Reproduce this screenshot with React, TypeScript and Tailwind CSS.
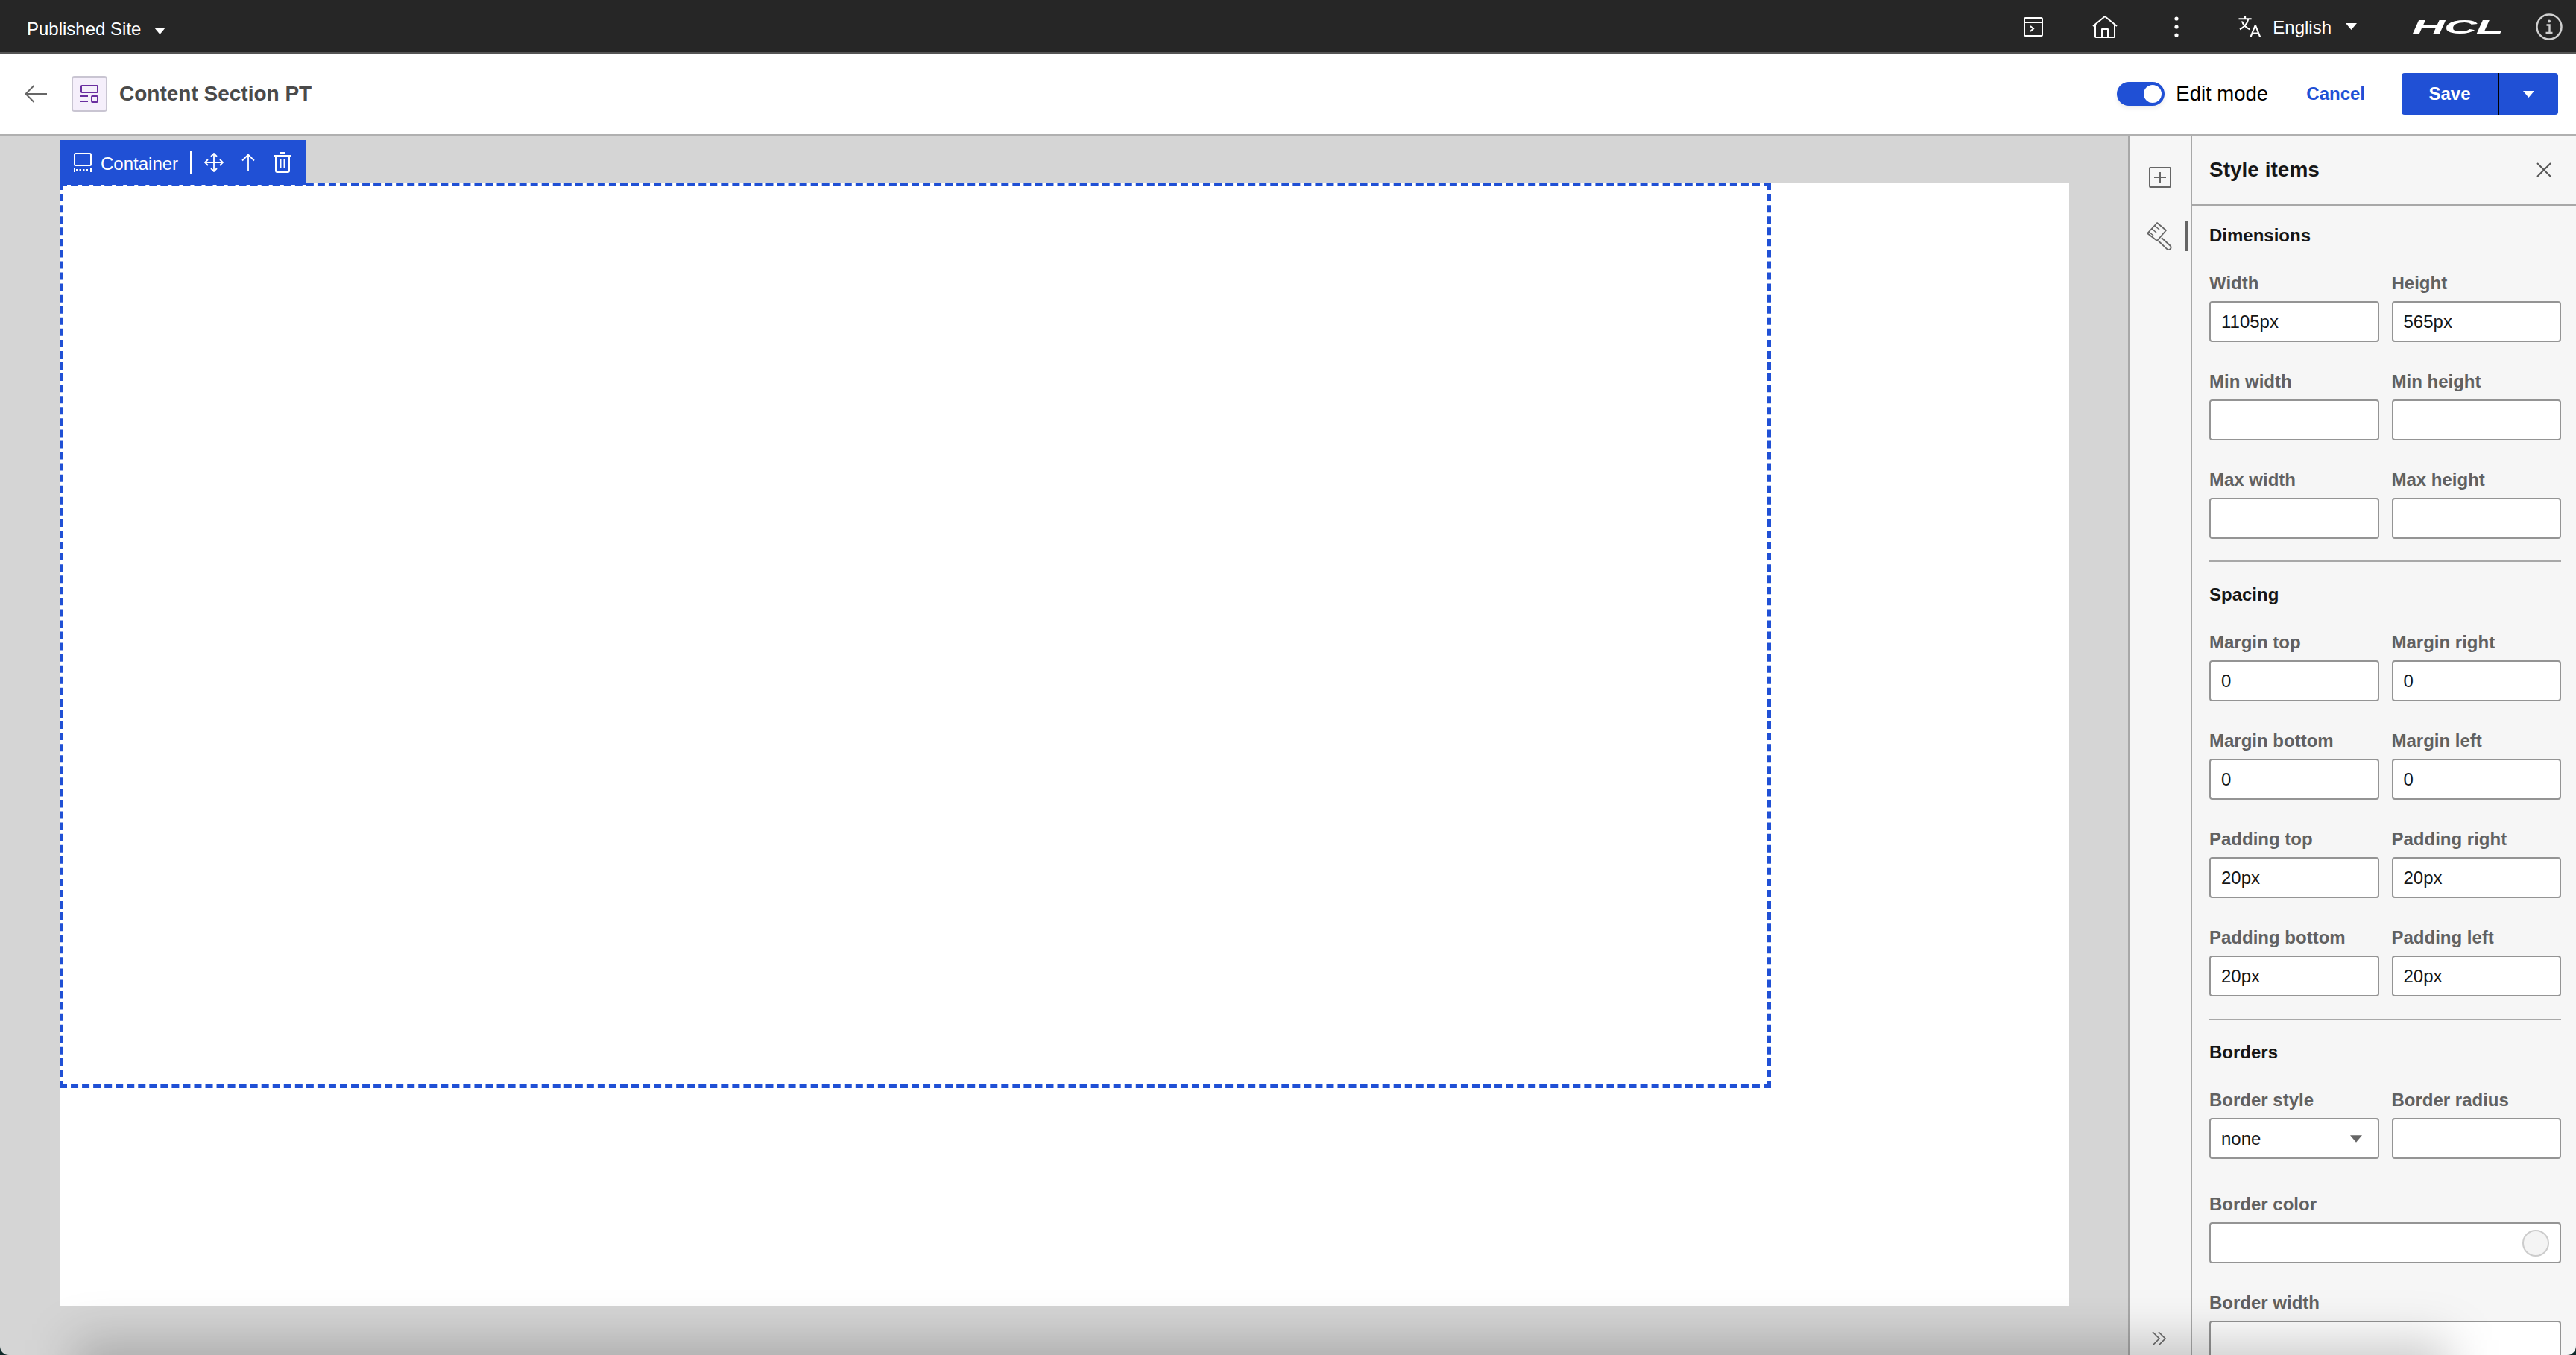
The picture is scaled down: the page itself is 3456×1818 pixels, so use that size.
import React from 'react';

const Caret = ({ className }: { className: string }) => (
  <svg viewBox="0 0 10 6" className={className} fill="currentColor">
    <path d="M0 0h10L5 6z" />
  </svg>
);

const Field = ({ label, value, className = '' }: { label: string; value?: string; className?: string }) => (
  <div className={className}>
    <div className="h-[28px] mb-[10px] text-[24px] leading-[28px] font-bold text-[#616161] whitespace-nowrap">{label}</div>
    <div className="h-[55px] bg-white border-2 border-[#949494] rounded-[4px] pl-[14px] flex items-center text-[24px] text-[#161616]">
      {value}
    </div>
  </div>
);

const SectionTitle = ({ children }: { children: React.ReactNode }) => (
  <div className="h-[28px] mb-[36px] text-[24px] leading-[28px] font-bold text-[#161616]">{children}</div>
);

const TopBar = () => (
  <div className="h-[72px] shrink-0 bg-[#262626] border-b-2 border-[#555555] flex items-center pl-[36px] pr-[18px] text-white">
    <span className="text-[24px] mt-[8px]">Published Site</span>
    <Caret className="w-[15px] h-[9px] ml-[18px] mt-[12px]" />

    <svg viewBox="0 0 26 26" className="ml-auto mt-[1px] w-[26px] h-[26px]" fill="none" stroke="currentColor" strokeWidth="2">
      <rect x="1" y="1" width="24" height="24" rx="1.5" />
      <path d="M1 7h24" />
      <path d="M9 12l4 3.5-4 3.5" />
    </svg>
    <svg viewBox="0 0 34 30" className="ml-[66px] mt-[1px] w-[34px] h-[30px]" fill="none" stroke="currentColor" strokeWidth="2" strokeLinejoin="round">
      <path d="M1 14L17 1l16 13" />
      <path d="M4 12v16a1 1 0 0 0 1 1h24a1 1 0 0 0 1-1V12" />
      <path d="M13 29V18h8v11" />
    </svg>
    <svg viewBox="0 0 8 30" className="ml-[75px] mt-[1px] w-[8px] h-[30px]" fill="currentColor">
      <circle cx="4" cy="4" r="2.6" />
      <circle cx="4" cy="15" r="2.6" />
      <circle cx="4" cy="26" r="2.6" />
    </svg>
    <svg viewBox="2 2 28 27" className="ml-[79px] mt-[1px] w-[31px] h-[29px]" fill="currentColor">
      <path d="M27.85,29H30L24,14H21.65l-6,15H17.8l1.6-4h6.85ZM20.2,23l2.62-6.56L25.45,23ZM18,7V5H11V2H9V5H2V7H12.74a14.71,14.71,0,0,1-3.19,6.18A13.5,13.5,0,0,1,7.26,9H5.16a16.47,16.47,0,0,0,3,5.58A16.84,16.84,0,0,1,3,18l.75,1.86A18.47,18.47,0,0,0,9.53,16a16.92,16.92,0,0,0,5.76,3.84L16,18a14.48,14.48,0,0,1-5.12-3.37A17.64,17.64,0,0,0,14.8,7Z" />
    </svg>
    <span className="ml-[15px] mt-[4px] text-[24px]">English</span>
    <Caret className="w-[15px] h-[9px] ml-[19px] mt-[1px]" />
    <div className="ml-[72px] mt-[1px] w-[126px] h-[20px] flex items-center justify-center">
      <span className="text-[26px] leading-none font-bold italic scale-x-[2.35] tracking-[-0.5px]">HCL</span>
    </div>
    <svg viewBox="0 0 36 36" className="ml-[42px] mt-[1px] w-[36px] h-[36px] text-[#cfcfcf]" fill="none" stroke="currentColor">
      <circle cx="18" cy="18" r="16.5" strokeWidth="2.5" />
      <circle cx="18" cy="10.5" r="2" fill="currentColor" stroke="none" />
      <path d="M14.5 15.5h4v10M13.5 26h9" strokeWidth="2.4" />
    </svg>
  </div>
);

const Header = () => (
  <div className="h-[110px] shrink-0 bg-white border-b-2 border-[#b0b0b0] flex items-center pl-[33px] pr-[24px]">
    <svg viewBox="0 0 30 24" className="w-[30px] h-[24px] text-[#666666]" fill="none" stroke="currentColor" strokeWidth="2">
      <path d="M30 12H1.5M12.5 1L1.5 12l11 11" />
    </svg>
    <div className="ml-[33px] w-[48px] h-[48px] bg-[#f5effb] border-2 border-[#c9c5d2] rounded-[4px] flex items-center justify-center">
      <svg viewBox="0 0 24 24" className="w-[24px] h-[24px] text-[#6a2ea0]" fill="none" stroke="currentColor" strokeWidth="2">
        <rect x="1" y="1" width="22" height="9" rx="1" />
        <path d="M0 15h10M0 22h10" />
        <rect x="15" y="15" width="8" height="8" rx="1" />
      </svg>
    </div>
    <span className="ml-[16px] text-[28px] font-bold text-[#4a4a4a]">Content Section PT</span>

    <div className="ml-auto w-[64px] h-[32px] bg-[#2050d5] rounded-full flex items-center justify-end pr-[4px] shadow-[0_3px_6px_rgba(0,0,0,0.08)]">
      <div className="w-[24px] h-[24px] bg-white rounded-full" />
    </div>
    <span className="ml-[15px] w-[124px] text-[27.5px] whitespace-nowrap text-black">Edit mode</span>
    <span className="ml-[51px] text-[24px] font-bold text-[#2050d5]">Cancel</span>
    <div className="ml-[49px] h-[56px] bg-[#2050d5] rounded-[4px] flex items-stretch text-white">
      <div className="w-[129px] flex items-center justify-center text-[24px] font-bold">Save</div>
      <div className="w-[2px] bg-black" />
      <div className="w-[79px] flex items-center justify-center">
        <Caret className="w-[15px] h-[9px]" />
      </div>
    </div>
  </div>
);

const Toolbar = () => (
  <div className="absolute left-[80px] top-[6px] z-10 w-[330px] h-[60px] bg-[#2050d5] flex items-center pl-[19px] text-white">
    <svg viewBox="0 0 24 26" className="w-[24px] h-[26px]" fill="none" stroke="currentColor" strokeWidth="2">
      <rect x="1" y="1" width="22" height="16" rx="1.5" />
      <path d="M1 20v6M23 20v6" />
      <path d="M3 23h18" strokeDasharray="2.5 2" />
    </svg>
    <span className="ml-[12px] text-[24px] mt-[3px]">Container</span>
    <div className="ml-[16px] w-[2px] h-[30px] bg-white" />
    <svg viewBox="0 0 26 26" className="ml-[17px] w-[26px] h-[26px]" fill="none" stroke="currentColor" strokeWidth="1.8">
      <path d="M13 1v24M1 13h24" />
      <path d="M9 5l4-4 4 4M9 21l4 4 4-4M5 9l-4 4 4 4M21 9l4 4-4 4" />
    </svg>
    <svg viewBox="0 0 18 24" className="ml-[24px] w-[18px] h-[24px]" fill="none" stroke="currentColor" strokeWidth="1.8">
      <path d="M9 24V1.5M1 9.5l8-8 8 8" />
    </svg>
    <svg viewBox="0 0 24 28" className="ml-[25px] w-[24px] h-[28px]" fill="none" stroke="currentColor" strokeWidth="2">
      <path d="M8 1h8M0 5h24" />
      <path d="M3 5v20a2 2 0 0 0 2 2h14a2 2 0 0 0 2-2V5" />
      <path d="M9.5 10v12M14.5 10v12" />
    </svg>
  </div>
);

const Rail = () => (
  <div className="w-[86px] shrink-0 bg-[#f6f6f6] border-x-2 border-[#a8a8a8] flex flex-col items-start pl-[26px] pt-[42px] pb-[12px] text-[#666666]">
    <svg viewBox="0 0 30 28" className="w-[30px] h-[28px]" fill="none" stroke="currentColor" strokeWidth="2">
      <rect x="1" y="1" width="28" height="26" rx="1" />
      <path d="M15 7v14M7 14h16" />
    </svg>
    <div className="relative mt-[46px]">
      <svg viewBox="0 0 36 38" className="w-[36px] h-[38px] -ml-[3px]" fill="none" stroke="currentColor" strokeWidth="1.8" strokeLinejoin="round">
        <path d="M14 1L1 15l13 10 12-14z" />
        <path d="M7 9l6 5M11 5l6 5M3 13l6 5" strokeWidth="1.6" />
        <path d="M20 21l12 11a3.2 3.2 0 0 1-4.5 4.4L15.5 25" />
      </svg>
      <div className="absolute -right-[20px] -top-[1px] w-[4px] h-[40px] bg-[#666666]" />
    </div>
    <svg viewBox="0 0 20 20" className="mt-auto ml-[4px] w-[20px] h-[20px]" fill="none" stroke="currentColor" strokeWidth="1.6">
      <path d="M1 1l9 9-9 9M9 1l9 9-9 9" />
    </svg>
  </div>
);

const StylePanel = () => (
  <div className="w-[515px] shrink-0 bg-[#f6f6f6] overflow-hidden">
    <div className="h-[94px] border-b-2 border-[#a8a8a8] flex items-center justify-between pl-[23px] pr-[33px]">
      <span className="text-[28px] font-bold text-[#161616]">Style items</span>
      <svg viewBox="0 0 20 20" className="w-[20px] h-[20px] text-[#555555]" fill="none" stroke="currentColor" strokeWidth="2">
        <path d="M1 1l18 18M19 1L1 19" />
      </svg>
    </div>
    <div className="pl-[23px] pr-[20px] pt-[26px]">
      <SectionTitle>Dimensions</SectionTitle>
      <div className="grid grid-cols-2 gap-x-[17px] gap-y-[39px]">
        <Field label="Width" value="1105px" />
        <Field label="Height" value="565px" />
        <Field label="Min width" />
        <Field label="Min height" />
        <Field label="Max width" />
        <Field label="Max height" />
      </div>
      <div className="h-[2px] bg-[#a8a8a8] mt-[29px] mb-[30px]" />

      <SectionTitle>Spacing</SectionTitle>
      <div className="grid grid-cols-2 gap-x-[17px] gap-y-[39px]">
        <Field label="Margin top" value="0" />
        <Field label="Margin right" value="0" />
        <Field label="Margin bottom" value="0" />
        <Field label="Margin left" value="0" />
        <Field label="Padding top" value="20px" />
        <Field label="Padding right" value="20px" />
        <Field label="Padding bottom" value="20px" />
        <Field label="Padding left" value="20px" />
      </div>
      <div className="h-[2px] bg-[#a8a8a8] mt-[30px] mb-[29px]" />

      <SectionTitle>Borders</SectionTitle>
      <div className="grid grid-cols-2 gap-x-[17px]">
        <div>
          <div className="h-[28px] mb-[10px] text-[24px] leading-[28px] font-bold text-[#616161]">Border style</div>
          <div className="h-[55px] bg-white border-2 border-[#949494] rounded-[4px] pl-[14px] pr-[21px] flex items-center justify-between text-[24px] text-[#161616]">
            none
            <Caret className="w-[16px] h-[10px] text-[#666666]" />
          </div>
        </div>
        <Field label="Border radius" />
      </div>
      <div className="mt-[47px]">
        <div className="h-[28px] mb-[10px] text-[24px] leading-[28px] font-bold text-[#616161]">Border color</div>
        <div className="h-[55px] bg-white border-2 border-[#949494] rounded-[4px] flex items-center justify-end pr-[14px]">
          <div className="w-[36px] h-[36px] rounded-full bg-[#f4f4f4] border-2 border-[#cccccc]" />
        </div>
      </div>
      <Field label="Border width" className="mt-[39px]" />
    </div>
  </div>
);

export default function App() {
  return (
    <div className="h-screen bg-[#0f2a2a] overflow-hidden font-['Liberation_Sans',Arial,sans-serif]">
      <div className="relative h-full rounded-b-[12px] overflow-hidden flex flex-col">
        <TopBar />
        <Header />
        <div className="flex-1 min-h-0 flex">
          <div className="relative flex-1 min-w-0 bg-[#d5d5d5] pl-[80px] pr-[79px] pt-[63px] pb-[66px]">
            <Toolbar />
            <div className="h-full bg-white">
              <div className="w-[2296px] h-[1215px] border-[5px] border-dashed border-[#2050d5]" />
            </div>
          </div>
          <Rail />
          <StylePanel />
        </div>
        {/* soft shadow that bleeds up from the bottom edge */}
        <div className="absolute left-[100px] right-[170px] -bottom-[90px] h-[110px] bg-black/20 blur-[32px] pointer-events-none" />
      </div>
    </div>
  );
}
